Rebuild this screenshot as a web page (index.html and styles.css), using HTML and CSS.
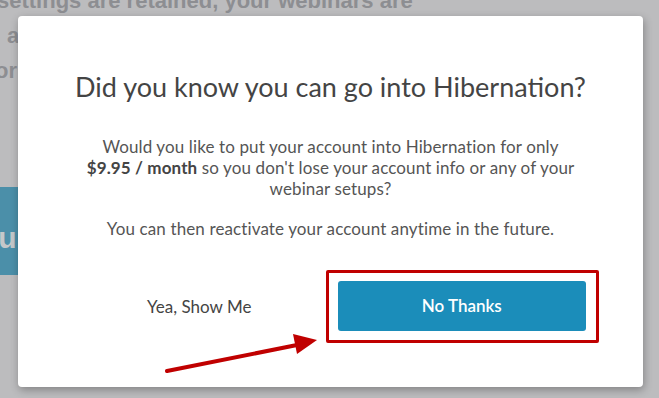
FILE: index.html
```html
<!DOCTYPE html>
<html lang="en">
<head>
  <meta charset="UTF-8" />
  <title>Cancel Account</title>
  <link rel="stylesheet" href="styles.css">
</head>
<body>

  <div class="page">
    <p class="page-text">
      <span class="line">settings are retained, your webinars are</span>
      <span class="line indent">archived so you can easily come back</span>
      <span class="line outdent">or re-use them when you get back to it</span>
    </p>
    <div class="page-banner">Return</div>
  </div>

  <div class="modal">
    <h1>Did you know you can go into Hibernation?</h1>
    <p>Would you like to put your account into Hibernation for only <b>$9.95 / month</b> so you don't lose your account info or any of your webinar setups?</p>
    <p>You can then reactivate your account anytime in the future.</p>

    <div class="actions">
      <a href="#" class="link-btn">Yea, Show Me</a>
      <div class="cta">
        <a href="#" class="button">No Thanks</a>
        <span class="highlight"></span>
      </div>
    </div>

    <svg class="arrow" width="170" height="50" viewBox="0 0 170 50">
      <line x1="5" y1="43" x2="140" y2="16" stroke="#c00000" stroke-width="4" stroke-linecap="round"/>
      <polygon points="155,12 131,6 135,26" fill="#c00000"/>
    </svg>
  </div>

</body>
</html>
```

FILE: styles.css
```css
* {
  box-sizing: border-box;
}

body {
  margin: 0;
  font-family: 'Lato', 'Liberation Sans', sans-serif;
  background: #bcbcbe;
  height: 398px;
  overflow: hidden;
  position: relative;
}

.page-text {
  margin: -17px 0 0 0;
  font-family: 'Liberation Sans', sans-serif;
  font-weight: bold;
  font-size: 22px;
  line-height: 35px;
  color: #8d8e92;
  white-space: nowrap;
}

.line {
  display: block;
  margin-left: -3px;
}

.line.indent {
  margin-left: 7px;
}

.line.outdent {
  margin-left: -5px;
}

.page-banner {
  margin-top: 99px;
  height: 88px;
  width: 300px;
  background: #4b8fa9;
  color: #c4c8ca;
  font-family: 'Liberation Sans', sans-serif;
  font-weight: bold;
  font-size: 30px;
  padding: 34px 0 0 0;
  text-indent: -50px;
}

.modal {
  position: absolute;
  top: 16px;
  left: 18px;
  width: 625px;
  height: 371px;
  background: #fff;
  border-radius: 4px;
  box-shadow: 1px 3px 8px rgba(0, 0, 0, 0.3);
  padding: 55px 50px 0;
  text-align: center;
  color: #555;
}

h1 {
  margin: 0 0 33px;
  font-size: 27px;
  font-weight: 400;
  line-height: 32px;
  color: #444;
}

.modal p {
  margin: 0 15px 19px;
  font-size: 17px;
  line-height: 21px;
  letter-spacing: 0.12px;
}

.modal b {
  color: #444;
}

.actions {
  display: grid;
  grid-template-columns: 1fr 1fr;
  align-items: center;
  margin-top: 42px;
}

.link-btn {
  color: #444;
  font-size: 17px;
  text-decoration: none;
}

.cta {
  position: relative;
  padding: 0 7px;
}

.button {
  display: block;
  height: 50px;
  line-height: 49px;
  background: #1b8dba;
  color: #fff;
  font-size: 17px;
  font-weight: 600;
  border-radius: 3px;
  text-decoration: none;
}

.highlight {
  position: absolute;
  top: -11px;
  bottom: -12px;
  left: -5px;
  right: -6px;
  border: 3px solid #c00000;
  border-radius: 2px;
}

.arrow {
  position: absolute;
  left: 144px;
  top: 312px;
}
```
